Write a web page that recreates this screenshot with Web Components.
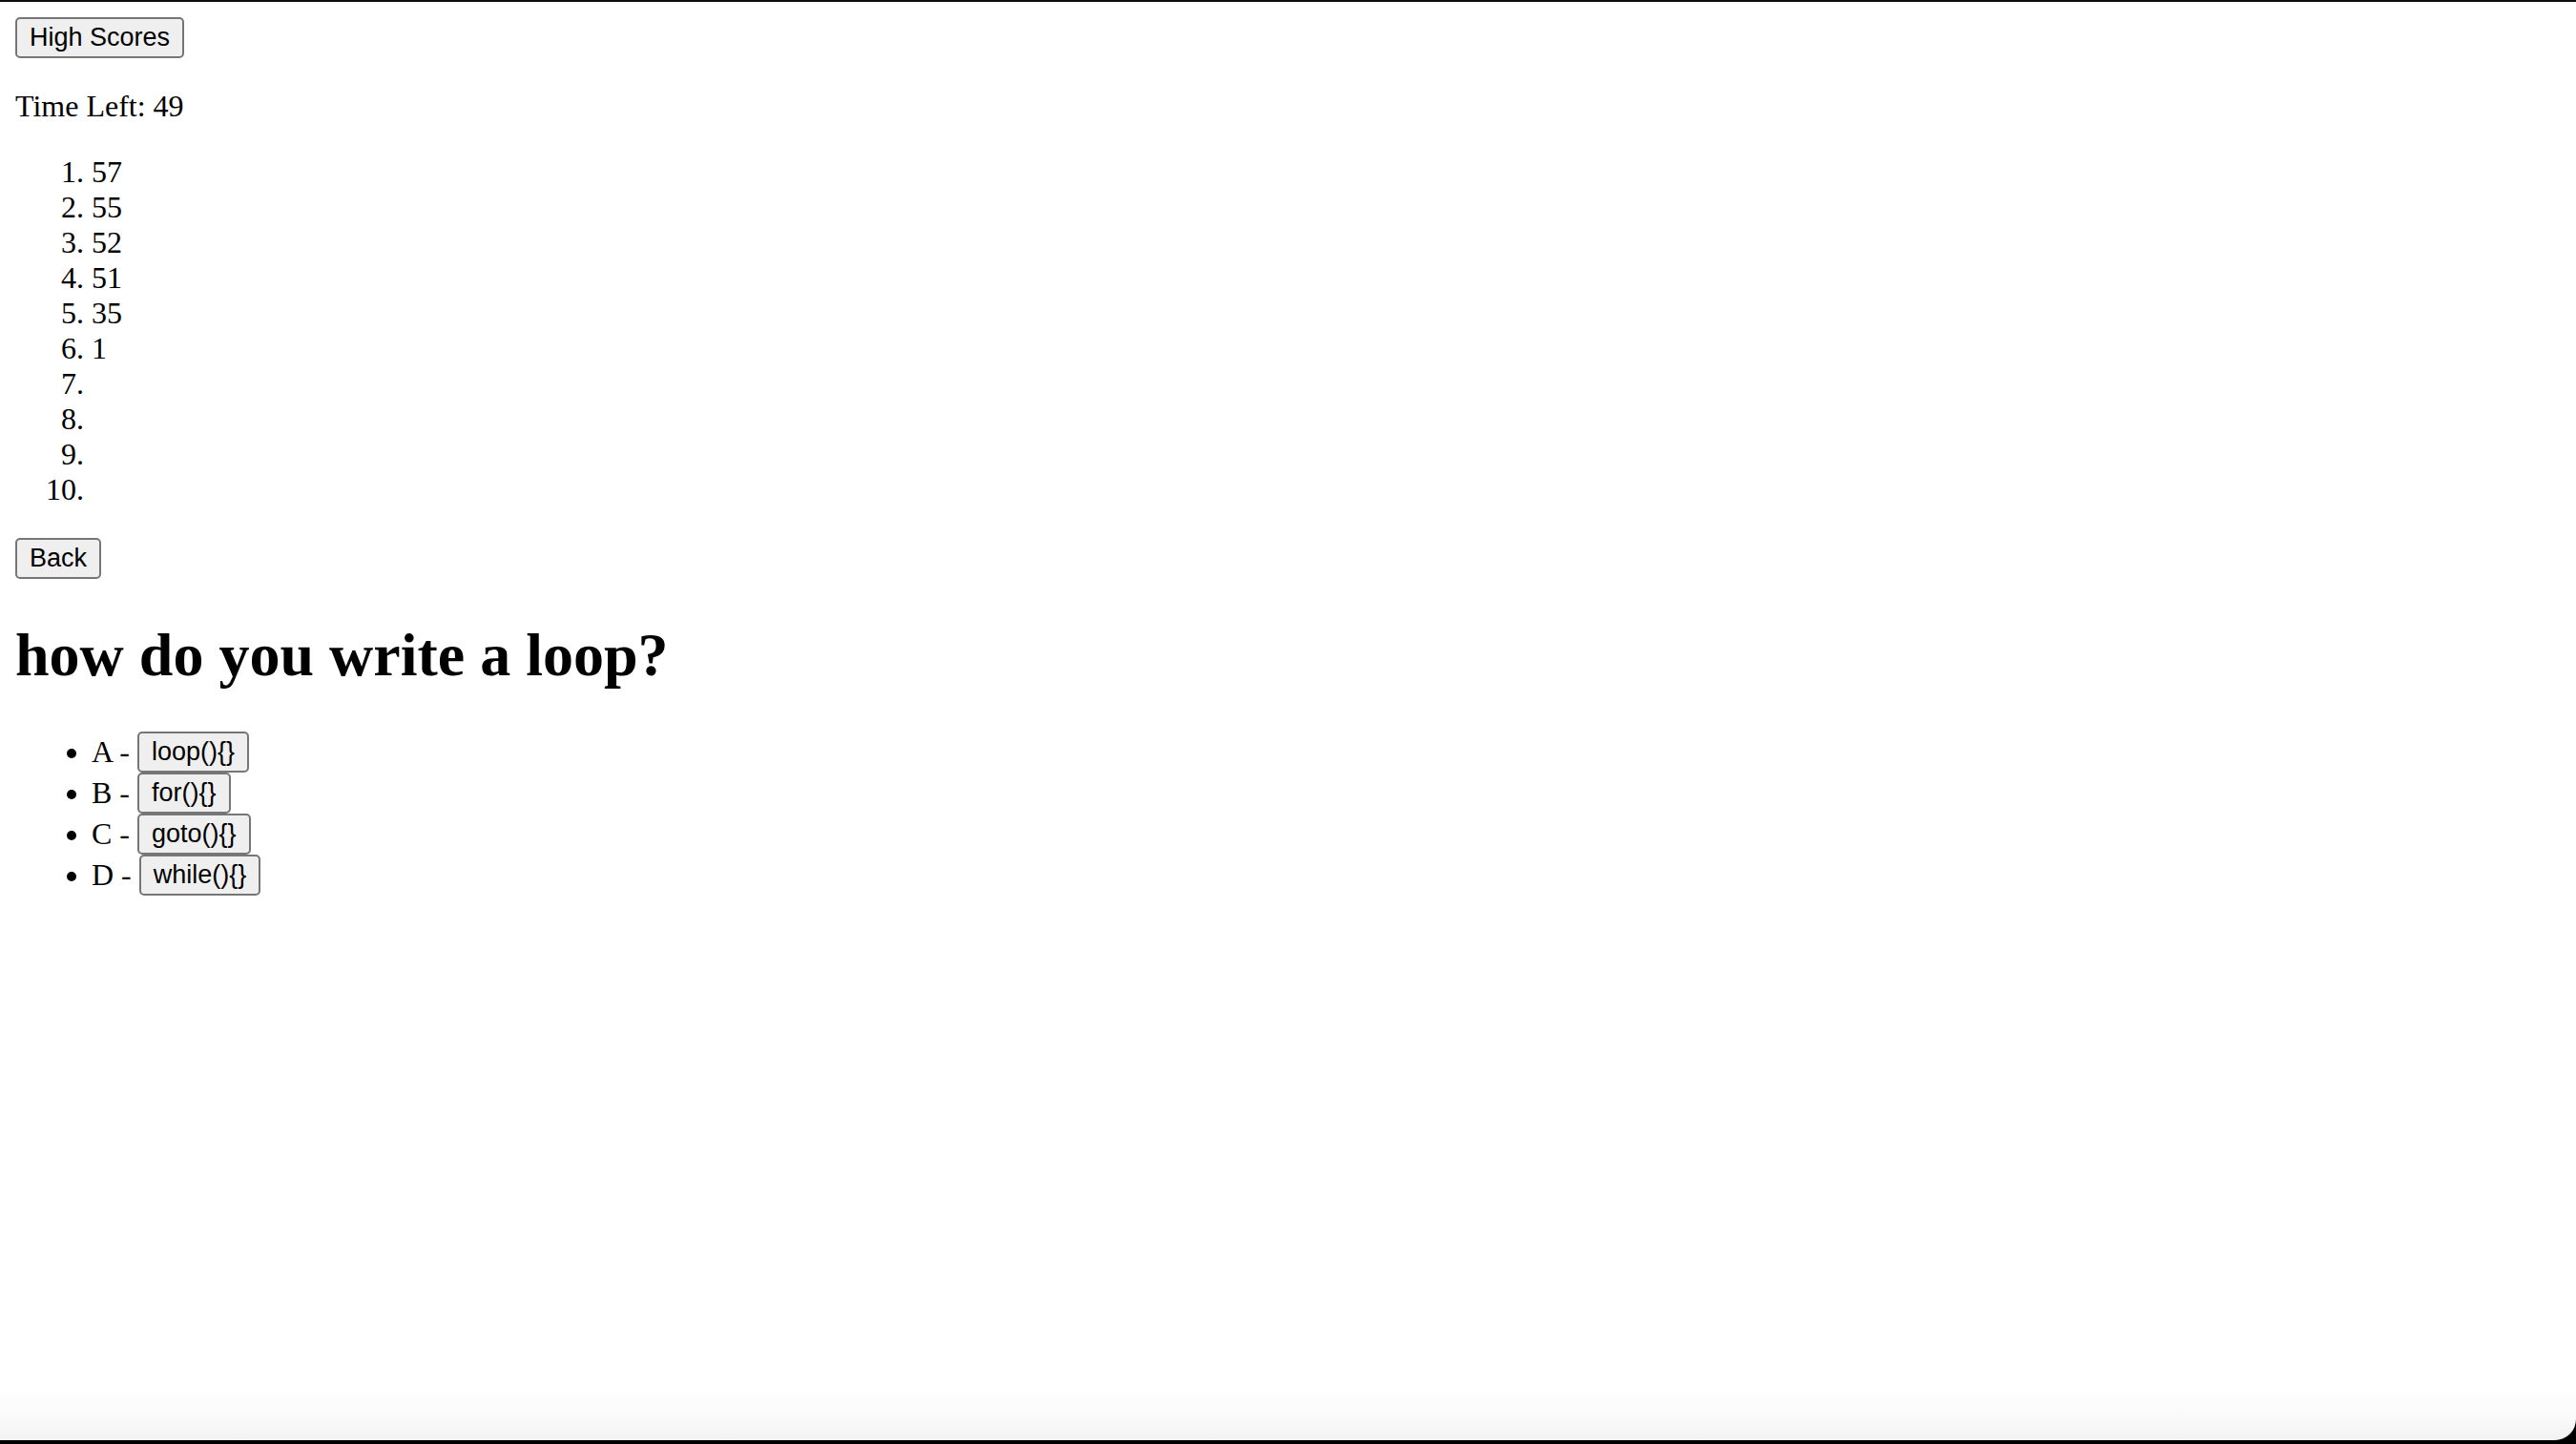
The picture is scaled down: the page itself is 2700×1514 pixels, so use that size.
<!DOCTYPE html>
<html lang="en">
<head>
<meta charset="utf-8">
<title>Coding Quiz</title>
<style>
  html, body { margin: 0; background: #000; }
</style>
</head>
<body>
<quiz-page>
  <quiz-button>High Scores</quiz-button>
  <quiz-timer seconds="49"></quiz-timer>
  <score-list scores="57,55,52,51,35,1" places="10"></score-list>
  <quiz-button>Back</quiz-button>
  <quiz-question answers="loop(){} for(){} goto(){} while(){}">how do you write a loop?</quiz-question>
</quiz-page>

<script>
  class QuizPage extends HTMLElement {
    constructor() {
      super();
      this.attachShadow({ mode: 'open' }).innerHTML = `
        <style>
          :host {
            display: flex; min-height: 100vh; box-sizing: border-box;
            border-top: 2px solid #0f0b14; border-bottom: 4px solid #000;
            font: 32px/37px "Liberation Serif", "Times New Roman", serif; color: #000;
            background: #000;
          }
          main {
            flex: 1; box-sizing: border-box; padding: 16px;
            display: flex; flex-direction: column; align-items: flex-start;
            border-bottom-right-radius: 22px;
            background: linear-gradient(to top, #f2f2f2, #fafafa 24px, #fff 60px);
          }
        </style>
        <main><slot></slot></main>`;
    }
  }

  class QuizButton extends HTMLElement {
    constructor() {
      super();
      this.attachShadow({ mode: 'open' }).innerHTML = `
        <style>
          :host { display: inline-flex; vertical-align: top; }
          button {
            box-sizing: border-box; height: 43px; margin: 0; padding: 0 13px;
            border: 2px solid #767676; border-radius: 5px;
            background: #efefef; color: #000;
            font: 27px/37px "Liberation Sans", Arial, sans-serif;
          }
        </style>
        <button type="button"><slot></slot></button>`;
    }
  }

  class QuizTimer extends HTMLElement {
    connectedCallback() {
      this.attachShadow({ mode: 'open' }).innerHTML = `
        <style>
          :host { display: block; }
          p { margin: 32px 0; }
        </style>
        <p>Time Left: ${this.getAttribute('seconds')}</p>`;
    }
  }

  class ScoreList extends HTMLElement {
    connectedCallback() {
      const scores = this.getAttribute('scores').split(',');
      const places = Number(this.getAttribute('places'));
      const rows = Array.from({ length: places }, (_, i) => `<li>${scores[i] || ''}</li>`);
      this.attachShadow({ mode: 'open' }).innerHTML = `
        <style>
          :host { display: block; }
          ol { margin: 0 0 32px; padding-left: 80px; }
          li { height: 37px; }
        </style>
        <ol>${rows.join('')}</ol>`;
    }
  }

  class QuizQuestion extends HTMLElement {
    connectedCallback() {
      const rows = this.getAttribute('answers').split(' ').map((answer, i) =>
        `<li>${'ABCD'[i]} - <quiz-button>${answer}</quiz-button></li>`);
      this.attachShadow({ mode: 'open' }).innerHTML = `
        <style>
          :host { display: block; }
          h1 { margin: 43px 0; font-size: 64px; line-height: 74px; }
          ul { margin: 0; padding-left: 80px; line-height: 43px; }
        </style>
        <h1><slot></slot></h1>
        <ul>${rows.join('')}</ul>`;
    }
  }

  customElements.define('quiz-page', QuizPage);
  customElements.define('quiz-button', QuizButton);
  customElements.define('quiz-timer', QuizTimer);
  customElements.define('score-list', ScoreList);
  customElements.define('quiz-question', QuizQuestion);
</script>
</body>
</html>
